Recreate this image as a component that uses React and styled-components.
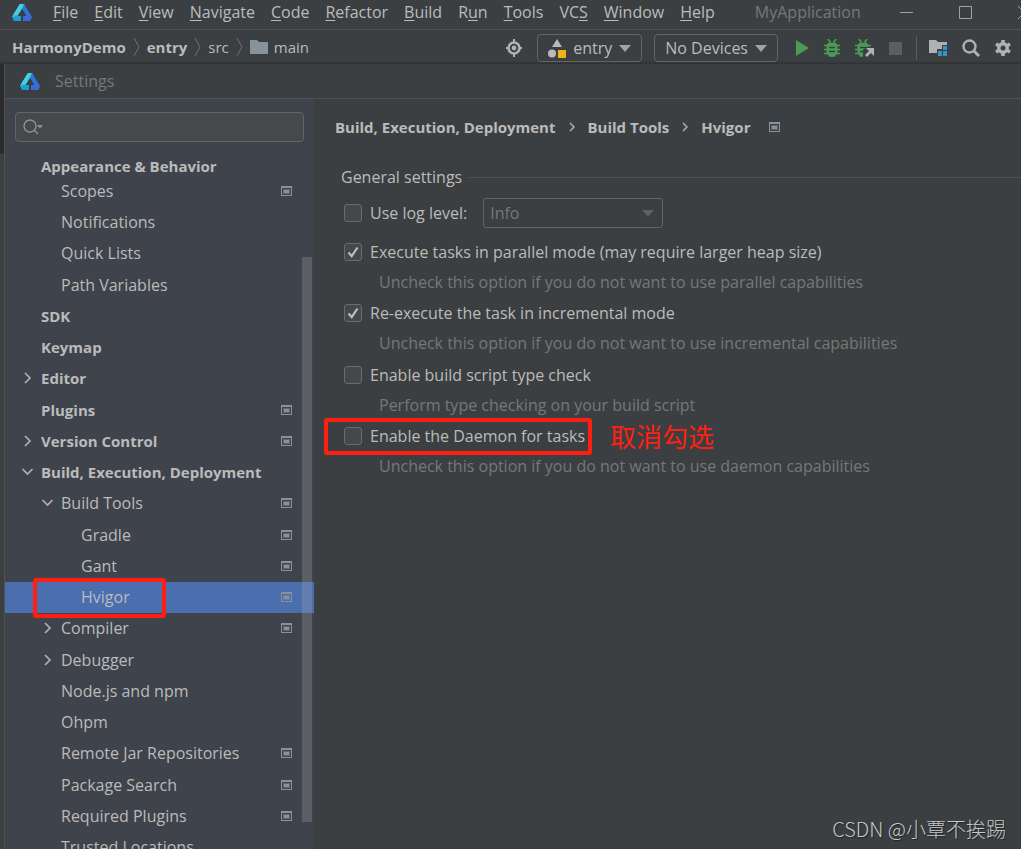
import React, {useState} from 'react';
import styled, {createGlobalStyle} from 'styled-components';

const Colours = {
	base: '#3c3f41',
	sidebar: '#3f434b',
	dark: '#2b2b2b',
	line: '#515151',
	border: '#646464',
	field: '#45494a',
	text: '#bbbbbb',
	muted: '#777777',
	icon: '#afb1b3',
	tag: '#87939a',
	selected: '#4b6eaf',
	green: '#499c54',
	mark: '#ff1f12',
};
const UiFont = '"Open Sans", "Noto Sans CJK SC", sans-serif';

const GlobalStyle = createGlobalStyle`
	* {
		box-sizing: border-box;
	}
	body {
		margin: 0;
		background: ${Colours.base};
		color: ${Colours.text};
		font-family: ${UiFont};
		font-size: 16px;
		line-height: 20px;
	}
	button, input, select {
		font: inherit;
		color: inherit;
	}
	svg {
		display: block;
		flex: none;
	}
`;
const Window = styled.div`
	display: flex;
	flex-direction: column;
	height: 100vh;
	overflow: hidden;
`;
const MenuBar = styled.header`
	display: flex;
	align-items: center;
	flex: none;
	height: 30px;
	padding: 0 0 5px 12px;
	border-bottom: 1px solid ${Colours.line};
	overflow: hidden;
`;
const Menus = styled.nav`
	display: flex;
	gap: 16px;
	margin-left: 21px;
`;
const MenuButton = styled.button`
	padding: 0;
	border: 0;
	background: none;
	white-space: nowrap;
	u {
		text-underline-offset: 2px;
	}
`;
const WindowTitle = styled.span`
	margin-left: 40px;
	color: ${Colours.muted};
`;
const WindowControls = styled.div`
	display: flex;
	gap: 46px;
	margin: 0 -10px 0 auto;
`;
const IconButton = styled.button`
	display: flex;
	align-items: center;
	justify-content: center;
	padding: 0;
	border: 0;
	background: none;
`;
const Toolbar = styled.div`
	display: flex;
	align-items: center;
	flex: none;
	height: 34px;
	padding: 0 10px 0 12px;
	box-shadow: inset 0 -3px 3px -2px rgba(0, 0, 0, 0.3);
`;
const Crumbs = styled.div`
	display: flex;
	align-items: center;
	gap: 7px;
	font-size: 15px;
`;
const Crumb = styled.span`
	display: flex;
	align-items: center;
	gap: 6px;
	font-weight: ${props => props.$bold ? 700 : 400};
	white-space: nowrap;
`;
const Tools = styled.div`
	display: flex;
	align-items: center;
	gap: 15px;
	margin-left: auto;
	padding-top: 2px;
`;
const Combo = styled.button`
	display: flex;
	align-items: center;
	gap: 7px;
	height: 28px;
	margin-right: ${props => props.$last ? '3px' : '-3px'};
	padding: 0 10px;
	border: 1px solid ${Colours.border};
	border-radius: 4px;
	background: none;
	white-space: nowrap;
`;
const Separator = styled.span`
	width: 1px;
	height: 24px;
	margin: 0 -3px 0 -1px;
	background: #5a5d5f;
`;
const Workspace = styled.div`
	display: flex;
	flex: 1;
	min-height: 0;
`;
const Gutter = styled.div`
	width: 5px;
	border-right: 1px solid ${Colours.line};
	background: linear-gradient(${Colours.dark} 90px, ${Colours.base} 90px);
`;
const Dialog = styled.section`
	display: flex;
	flex: 1;
	flex-direction: column;
	min-width: 0;
`;
const DialogTitle = styled.div`
	display: flex;
	align-items: center;
	flex: none;
	gap: 15px;
	height: 35px;
	padding-left: 15px;
	border-bottom: 1px solid ${Colours.line};
	color: ${Colours.muted};
`;
const DialogBody = styled.div`
	display: flex;
	flex: 1;
	min-height: 0;
`;
const Sidebar = styled.aside`
	position: relative;
	flex: none;
	width: 309px;
	background: ${Colours.sidebar};
	overflow: hidden;
`;
const SearchBox = styled.label`
	display: flex;
	align-items: center;
	height: 30px;
	margin: 13px 10px 14px;
	padding-left: 7px;
	border: 1px solid ${Colours.border};
	border-radius: 4px;
	background: ${Colours.field};
`;
const SearchInput = styled.input`
	flex: 1;
	min-width: 0;
	border: 0;
	outline: none;
	background: none;
`;
const StickyHeading = styled.div`
	height: 20px;
	padding-left: 36px;
	font-size: 15px;
	font-weight: 700;
`;
const Tree = styled.ul`
	display: grid;
	grid-auto-rows: 31px 31px 32px 31px;
	margin: 0;
	padding: 0;
	list-style: none;
`;
const TreeRow = styled.li`
	position: relative;
	display: flex;
	align-items: center;
	padding: 0 22px 2px ${props => 16 + props.$level * 20}px;
	background: ${props => props.$selected ? Colours.selected : 'none'};
	font-size: ${props => props.$level === 0 ? 15 : 16}px;
	font-weight: ${props => props.$level === 0 ? 700 : 400};
	white-space: nowrap;
`;
const Twisty = styled.span`
	display: flex;
	width: 20px;
`;
const TreeLabel = styled.span`
	flex: 1;
`;
const Thumb = styled.div`
	position: absolute;
	top: 158px;
	right: 2px;
	width: 10px;
	height: 565px;
	background: rgba(166, 166, 166, 0.28);
`;
const Marker = styled.span`
	position: absolute;
	top: ${props => props.$top}px;
	left: ${props => props.$left}px;
	width: ${props => props.$width}px;
	height: ${props => props.$height}px;
	border: 4px solid ${Colours.mark};
	border-radius: 3px;
	pointer-events: none;
	z-index: 1;
`;
const Note = styled.span`
	position: absolute;
	left: 269px;
	color: ${Colours.mark};
	font-family: "Noto Sans CJK SC", sans-serif;
	font-size: 26px;
	line-height: 30px;
	white-space: nowrap;
`;
const Content = styled.main`
	flex: 1;
	min-width: 0;
	padding: 18px 0 0 21px;
`;
const Path = styled.div`
	display: flex;
	align-items: center;
	gap: 13px;
	font-size: 15px;
	font-weight: 700;
	white-space: nowrap;
	svg:last-child {
		margin-left: 6px;
	}
`;
const Form = styled.form`
	padding-left: 6px;
`;
const Legend = styled.h2`
	display: flex;
	align-items: center;
	gap: 6px;
	margin: 30px 0 11px;
	font-size: 16px;
	font-weight: 400;
	line-height: 20px;
	&::after {
		content: '';
		flex: 1;
		height: 1px;
		background: ${Colours.line};
	}
`;
const LevelRow = styled.div`
	display: flex;
	align-items: center;
	gap: 16px;
	height: 30px;
	margin-bottom: 9px;
	padding-left: 3px;
`;
const CheckLabel = styled.label`
	position: relative;
	display: flex;
	align-items: center;
	gap: 8px;
	white-space: nowrap;
`;
const CheckBox = styled.input`
	display: grid;
	place-items: center;
	appearance: none;
	width: 18px;
	height: 18px;
	margin: 0;
	border: 1px solid #6b6b6b;
	border-radius: 3px;
	background: #43494a;
	&:checked {
		background: #43494a url("data:image/svg+xml,%3Csvg xmlns='http://www.w3.org/2000/svg' viewBox='0 0 16 16' fill='none' stroke='%23bbbbbb' stroke-width='2.2'%3E%3Cpath d='M3.5 8.5l3.2 3.6L12.5 3.5'/%3E%3C/svg%3E") center / 16px no-repeat;
	}
`;
const SelectWrap = styled.div`
	display: grid;
	align-items: center;
	width: 180px;
	color: ${Colours.muted};
	> * {
		grid-area: 1 / 1;
	}
	svg {
		justify-self: end;
		margin-right: 9px;
		pointer-events: none;
	}
`;
const Select = styled.select`
	appearance: none;
	width: 100%;
	height: 30px;
	padding: 0 6px;
	border: 1px solid ${Colours.border};
	border-radius: 3px;
	background: none;
	opacity: 1;
`;
const Options = styled.div`
	display: grid;
	grid-auto-rows: 61px 62px;
`;
const Option = styled.div`
	position: relative;
	padding-left: 3px;
`;
const CheckLine = styled.div`
	display: flex;
	align-items: center;
	height: 30px;
`;
const Hint = styled.div`
	padding: 5px 0 0 35px;
	color: ${Colours.muted};
	white-space: nowrap;
`;
const Watermark = styled.div`
	position: absolute;
	right: 15px;
	bottom: 5px;
	color: #c6c7c8;
	font-family: "Noto Sans CJK SC", sans-serif;
	font-size: 20px;
	font-weight: 300;
	line-height: 30px;
	text-shadow: 1px 1px 1px #222;
`;

const Logo = () => (
	<svg width="20" height="17" viewBox="0 0 20 17">
		<path d="M8 0h4l1 2-7 10H9v5H2L0 13z" fill="#1c9fd0"/>
		<path d="M8 0h4l1 2-7 10-6 1z" fill="#35bfd9"/>
		<path d="M8 0h4l-6 11H1z" fill="#45d0df"/>
		<path d="M12 0l8 13-2 4h-7v-5h3L10 5z" fill="#2b75dd"/>
		<path d="M14 12l6 1-2 4h-7v-5z" fill="#4169d6"/>
		<path d="M10 5l4.500 7H5.500z" fill={Colours.base}/>
		<path d="M9.500 11h1v6h-1z" fill={Colours.base}/>
	</svg>
);
const CrumbArrow = () => (
	<svg width="7" height="20" viewBox="0 0 7 20" fill="none" stroke="#6e7072">
		<path d="M1 1l5 9-5 9"/>
	</svg>
);
const Down = ({color = '#a0a2a4'}) => (
	<svg width="12" height="7" viewBox="0 0 12 7"><path d="M0 0h12L6 7z" fill={color}/></svg>
);
const Chevron = ({open}) => (
	<svg width="13" height="12" viewBox="0 0 13 12" fill="none" stroke={Colours.icon} strokeWidth="1.7">
		<path d={open ? 'M1.500 3l5 5 5-5' : 'M4 1l5 5-5 5'}/>
	</svg>
);
const ProjectTag = () => (
	<svg width="11" height="10" viewBox="0 0 11 10">
		<path d="M0 0h11v10H0zM1 2v7h9V2z" fill={Colours.tag} fillRule="evenodd"/>
		<path d="M2 3h7v5H2z" fill={Colours.tag} opacity=".45"/>
		<path d="M3 4h5v3H3z" fill={Colours.tag}/>
	</svg>
);
const Folder = () => (
	<svg width="18" height="14" viewBox="0 0 18 14"><path d="M0 0h7l2 2h9v12H0z" fill={Colours.tag}/></svg>
);
const Target = () => (
	<svg width="16" height="18" viewBox="0 0 16 18" fill="none" stroke={Colours.icon}>
		<circle cx="8" cy="9" r="5.500" strokeWidth="2.600"/>
		<circle cx="8" cy="9" r="2.400" fill={Colours.icon} stroke="none"/>
		<path d="M8 0v4M8 14v4M0 9h3M13 9h3" strokeWidth="2"/>
	</svg>
);
const Shapes = () => (
	<svg width="18" height="19" viewBox="0 0 18 19">
		<path d="M9 0l5 8H4z" fill="#b8babb"/>
		<circle cx="4" cy="14.500" r="4" fill="#b8babb"/>
		<path d="M10 11h8v8h-8z" fill="#f2b314"/>
	</svg>
);
const BugBody = () => (
	<g fill="none" stroke={Colours.green} strokeWidth="1.600">
		<path d="M4.500 4.500h7l1.200 3v6L10.500 17h-5l-2.200-3.500v-6z" fill={Colours.green}/>
		<path d="M4 0l2.500 3.500M12 0L9.500 3.500M0 6.500h16M0 10.500h16M0 14.500h16"/>
		<path d="M5 8.500h6M5 12.500h6" stroke={Colours.base} strokeWidth="1.300"/>
	</g>
);
const Bug = () => <svg width="16" height="18" viewBox="0 0 16 18"><BugBody/></svg>;
const BugAttach = () => (
	<svg width="19" height="19" viewBox="0 0 19 19">
		<BugBody/>
		<path d="M8 19V11l3-3h8v11z" fill={Colours.base}/>
		<path d="M11 9h8v8l-3-3-4 4-2-2 4-4z" fill={Colours.icon}/>
	</svg>
);
const Structure = () => (
	<svg width="18" height="16" viewBox="0 0 18 16">
		<path d="M0 0h7l2 2h9v3h-5v4H8v4H0z" fill={Colours.icon}/>
		<path d="M14 6h4v4h-4zM9 11h4v5H9zM14 11h4v5h-4z" fill="#3592c4"/>
	</svg>
);
const Magnifier = () => (
	<svg width="18" height="18" viewBox="0 0 18 18" fill="none" stroke={Colours.icon}>
		<circle cx="7.500" cy="7.500" r="6" strokeWidth="2.400"/>
		<path d="M11.500 11.500l5.500 5.500" strokeWidth="3"/>
	</svg>
);
const Gear = () => (
	<svg width="16" height="16" viewBox="0 0 16 16">
		<circle cx="8" cy="8" r="4.200" fill="none" stroke={Colours.icon} strokeWidth="3.400"/>
		<path d="M8 0v4M8 12v4M1 4l3.500 2M11.500 10L15 12M1 12l3.500-2M11.500 6L15 4" stroke={Colours.icon} strokeWidth="3.600"/>
	</svg>
);
const SearchIcon = () => (
	<svg width="20" height="16" viewBox="0 0 20 16" fill="none" stroke="#8a9296" strokeWidth="1.400">
		<circle cx="7" cy="7" r="6"/>
		<path d="M11 11l4 4"/>
		<path d="M14 6h6l-3 3.500z" fill="#8a9296" stroke="none"/>
	</svg>
);

// [text before the mnemonic, mnemonic, rest]
const menus = [
	['', 'F', 'ile'], ['', 'E', 'dit'], ['', 'V', 'iew'], ['', 'N', 'avigate'],
	['', 'C', 'ode'], ['', 'R', 'efactor'], ['', 'B', 'uild'], ['R', 'u', 'n'],
	['', 'T', 'ools'], ['VC', 'S', ''], ['', 'W', 'indow'], ['', 'H', 'elp'],
];
const tree = [
	{name: 'Scopes', level: 1, tag: true},
	{name: 'Notifications', level: 1},
	{name: 'Quick Lists', level: 1},
	{name: 'Path Variables', level: 1},
	{name: 'SDK', level: 0},
	{name: 'Keymap', level: 0},
	{name: 'Editor', level: 0, node: 'closed'},
	{name: 'Plugins', level: 0, tag: true},
	{name: 'Version Control', level: 0, node: 'closed', tag: true},
	{name: 'Build, Execution, Deployment', level: 0, node: 'open'},
	{name: 'Build Tools', level: 1, node: 'open', tag: true},
	{name: 'Gradle', level: 2, tag: true},
	{name: 'Gant', level: 2, tag: true},
	{name: 'Hvigor', level: 2, tag: true, selected: true},
	{name: 'Compiler', level: 1, node: 'closed', tag: true},
	{name: 'Debugger', level: 1, node: 'closed'},
	{name: 'Node.js and npm', level: 1},
	{name: 'Ohpm', level: 1},
	{name: 'Remote Jar Repositories', level: 1, tag: true},
	{name: 'Package Search', level: 1, tag: true},
	{name: 'Required Plugins', level: 1, tag: true},
	{name: 'Trusted Locations', level: 1},
];
const options = [
	{id: 'parallel', title: 'Execute tasks in parallel mode (may require larger heap size)', hint: 'Uncheck this option if you do not want to use parallel capabilities'},
	{id: 'incremental', title: 'Re-execute the task in incremental mode', hint: 'Uncheck this option if you do not want to use incremental capabilities'},
	{id: 'typeCheck', title: 'Enable build script type check', hint: 'Perform type checking on your build script'},
	{id: 'daemon', title: 'Enable the Daemon for tasks', hint: 'Uncheck this option if you do not want to use daemon capabilities', note: '取消勾选'},
];

const SettingsTree = () => (
	<Sidebar>
		<SearchBox>
			<SearchIcon/>
			<SearchInput type="text" aria-label="Search settings"/>
		</SearchBox>
		<StickyHeading>Appearance &amp; Behavior</StickyHeading>
		<Tree>
			{tree.map(item => (
				<TreeRow key={item.name} $level={item.level} $selected={item.selected}>
					<Twisty>{item.node ? <Chevron open={item.node === 'open'}/> : null}</Twisty>
					<TreeLabel>{item.name}</TreeLabel>
					{item.tag ? <ProjectTag/> : null}
					{item.selected ? <Marker $top={-4} $left={28} $width={133} $height={40}/> : null}
				</TreeRow>
			))}
		</Tree>
		<Thumb/>
	</Sidebar>
);

const HvigorSettings = () => {
	const [values, setValues] = useState({
		logLevel: false,
		parallel: true,
		incremental: true,
		typeCheck: false,
		daemon: false,
	});
	const toggle = (e) => setValues({...values, [e.target.name]: e.target.checked});

	return (
		<Form>
			<Legend>General settings</Legend>
			<LevelRow>
				<CheckLabel>
					<CheckBox type="checkbox" name="logLevel" checked={values.logLevel} onChange={toggle}/>
					Use log level:
				</CheckLabel>
				<SelectWrap>
					<Select aria-label="Log level" disabled={!values.logLevel} defaultValue="info">
						<option value="info">Info</option>
						<option value="debug">Debug</option>
					</Select>
					<Down color="#5f6163"/>
				</SelectWrap>
			</LevelRow>
			<Options>
				{options.map(option => (
					<Option key={option.id}>
						<CheckLine>
							<CheckLabel>
								<CheckBox type="checkbox" name={option.id} checked={values[option.id]} onChange={toggle}/>
								{option.title}
							</CheckLabel>
							{option.note ? <Note>{option.note}</Note> : null}
						</CheckLine>
						<Hint>{option.hint}</Hint>
						{option.note ? <Marker $top={-3} $left={-17} $width={268} $height={37}/> : null}
					</Option>
				))}
			</Options>
		</Form>
	);
};

const App = () => (
	<Window>
		<GlobalStyle/>
		<MenuBar>
			<Logo/>
			<Menus>
				{menus.map(([before, key, after]) => (
					<MenuButton key={before + key + after}>{before}<u>{key}</u>{after}</MenuButton>
				))}
			</Menus>
			<WindowTitle>MyApplication</WindowTitle>
			<WindowControls>
				<IconButton aria-label="Minimize">
					<svg width="13" height="13" stroke="#a0a2a3"><path d="M0 6.500h13"/></svg>
				</IconButton>
				<IconButton aria-label="Maximize">
					<svg width="13" height="13" fill="none" stroke="#a0a2a3"><path d="M.5.5h12v12H.5z"/></svg>
				</IconButton>
				<IconButton aria-label="Close">
					<svg width="13" height="13" stroke="#a0a2a3"><path d="M0 0l13 13M13 0L0 13"/></svg>
				</IconButton>
			</WindowControls>
		</MenuBar>
		<Toolbar>
			<Crumbs>
				<Crumb $bold>HarmonyDemo</Crumb>
				<CrumbArrow/>
				<Crumb $bold>entry</Crumb>
				<CrumbArrow/>
				<Crumb>src</Crumb>
				<CrumbArrow/>
				<Crumb><Folder/>main</Crumb>
			</Crumbs>
			<Tools>
				<IconButton aria-label="Select opened file"><Target/></IconButton>
				<Combo><Shapes/>entry<Down/></Combo>
				<Combo $last>No Devices<Down/></Combo>
				<IconButton aria-label="Run">
					<svg width="13" height="16"><path d="M0 0l13 8-13 8z" fill={Colours.green}/></svg>
				</IconButton>
				<IconButton aria-label="Debug"><Bug/></IconButton>
				<IconButton aria-label="Attach debugger"><BugAttach/></IconButton>
				<IconButton aria-label="Stop">
					<svg width="13" height="13"><path d="M0 0h13v13H0z" fill="#5e5e5e"/></svg>
				</IconButton>
				<Separator/>
				<IconButton aria-label="Project structure"><Structure/></IconButton>
				<IconButton aria-label="Search everywhere"><Magnifier/></IconButton>
				<IconButton aria-label="Settings"><Gear/></IconButton>
			</Tools>
		</Toolbar>
		<Workspace>
			<Gutter/>
			<Dialog>
				<DialogTitle><Logo/>Settings</DialogTitle>
				<DialogBody>
					<SettingsTree/>
					<Content>
						<Path>
							<span>Build, Execution, Deployment</span>
							<svg width="6" height="10" fill="none" stroke={Colours.icon} strokeWidth="1.500"><path d="M1 1l4 4-4 4"/></svg>
							<span>Build Tools</span>
							<svg width="6" height="10" fill="none" stroke={Colours.icon} strokeWidth="1.500"><path d="M1 1l4 4-4 4"/></svg>
							<span>Hvigor</span>
							<ProjectTag/>
						</Path>
						<HvigorSettings/>
					</Content>
				</DialogBody>
			</Dialog>
		</Workspace>
		<Watermark>CSDN @小覃不挨踢</Watermark>
	</Window>
);

export default App;
